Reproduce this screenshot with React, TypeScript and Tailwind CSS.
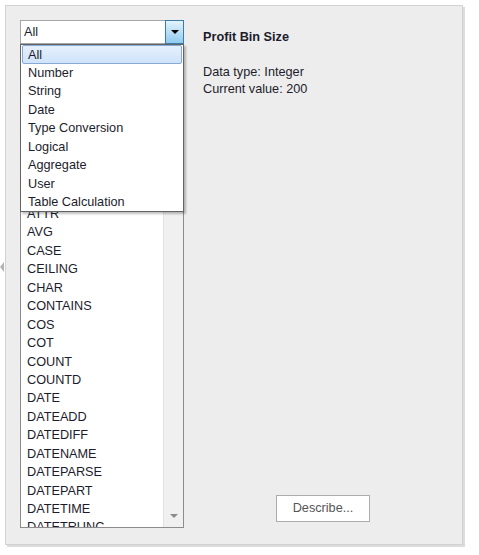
import React from 'react';

const categories = ['All', 'Number', 'String', 'Date', 'Type Conversion', 'Logical', 'Aggregate', 'User', 'Table Calculation'];

// rows above ATTR sit behind the open dropdown, so the list starts there
const functions = [
  'ATTR', 'AVG', 'CASE', 'CEILING', 'CHAR', 'CONTAINS', 'COS', 'COT', 'COUNT', 'COUNTD', 'DATE', 'DATEADD',
  'DATEDIFF', 'DATENAME', 'DATEPARSE', 'DATEPART', 'DATETIME', 'DATETRUNC',
];

const App: React.FC = () => {
  return (
    <div
      className="relative w-[479px] h-[555px] bg-white text-[12.7px] text-[#1c1c2c]"
      style={{ fontFamily: '"Liberation Sans", Arial, sans-serif' }}
    >
      {/* splitter handle */}
      <div className="absolute left-0 top-[262px] w-0 h-0 border-y-[5px] border-y-transparent border-r-[4px] border-r-[#b4b4b4]" />

      <div className="ml-[5px] pt-[5px]">
        <div className="w-[458px] h-[540px] bg-[#ededed] border border-[#d2d2d2] shadow-[2px_2px_0_#dcdcdc] flex pl-[14px] pt-[14px] pb-[16px]">
          {/* left column */}
          <div className="relative w-[164px] flex flex-col">
            <div className="h-[24px] flex bg-white border border-[#a6a6a6]">
              <div className="flex-1 pl-[3px] leading-[22px]">All</div>
              <div className="w-[19px] -mt-px -mb-px -mr-px border border-[#3d7bab] bg-gradient-to-b from-[#e3f2fd] to-[#8fcbee] flex items-center justify-center">
                <div className="w-0 h-0 border-x-[4px] border-x-transparent border-t-[4px] border-t-black" />
              </div>
            </div>

            <div className="flex-1 h-[484px] bg-white border border-[#8c8c8c] border-t-0 flex overflow-hidden">
              <div className="flex-1 pt-[161px] pl-[6px]">
                {functions.map((f) => (
                  <div key={f} className="h-[18.45px] leading-[18.45px] whitespace-nowrap">
                    {f}
                  </div>
                ))}
              </div>
              <div className="w-[20px] bg-[#f0f0f0] border-l border-[#e2e2e2] flex flex-col justify-end items-center pb-[9px]">
                <div className="w-0 h-0 border-x-[4px] border-x-transparent border-t-[4px] border-t-[#8a8a8a]" />
              </div>
            </div>

            {/* open dropdown */}
            <div className="absolute left-0 top-[24px] w-[164px] h-[168px] bg-white border border-[#646464] shadow-[2px_2px_2px_rgba(0,0,0,0.25)] px-px">
              {categories.map((c, i) => (
                <div
                  key={c}
                  className={
                    i === 0
                      ? 'h-[18.5px] leading-[18px] pl-[5px] rounded-[2px] border border-[#86a9d6] bg-gradient-to-b from-[#e6f0fc] to-[#cfe3fb]'
                      : 'h-[18.5px] leading-[19.5px] pl-[6px]'
                  }
                >
                  {c}
                </div>
              ))}
            </div>
          </div>

          {/* right column */}
          <div className="flex-1 flex flex-col">
            <div className="pl-[19px] pt-[9px] font-bold leading-[17px]">Profit Bin Size</div>
            <div className="pl-[19px] mt-[18px] leading-[17px]">
              <div>Data type: Integer</div>
              <div>Current value: 200</div>
            </div>
            <button className="mt-auto mb-[6px] self-center w-[94px] h-[27px] bg-white border border-[#acacac] text-[#555] text-[12.7px]">
              Describe...
            </button>
          </div>
        </div>
      </div>
    </div>
  );
};

export default App;
